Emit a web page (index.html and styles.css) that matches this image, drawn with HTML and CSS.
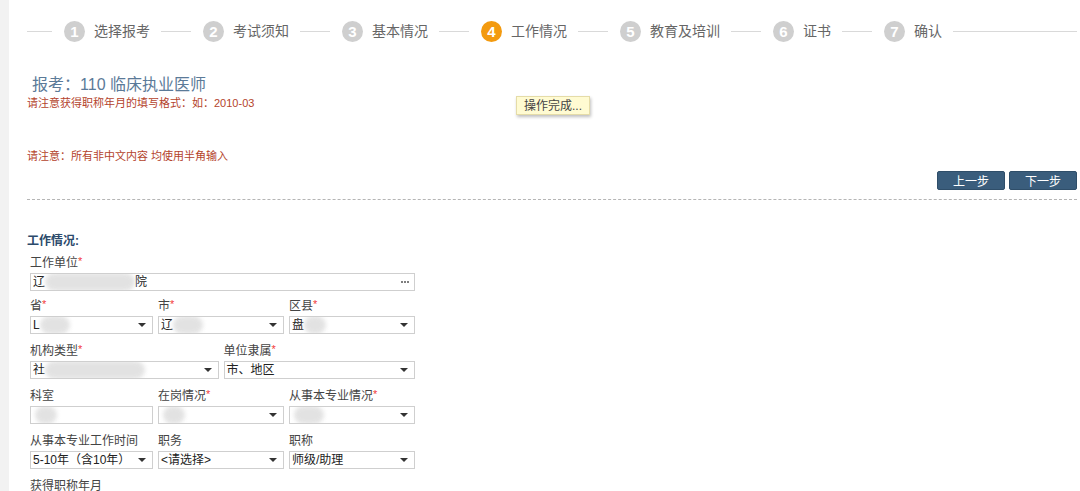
FILE: index.html
```html
<!DOCTYPE html>
<html lang="zh">
<head>
<meta charset="utf-8">
<title>报考 - 工作情况</title>
<link rel="stylesheet" href="styles.css">
</head>
<body>
<div class="page">
  <aside class="strip"></aside>
  <main class="main">
    <nav class="steps">
      <span class="line first"></span>
      <span class="step"><i class="num">1</i><span class="label">选择报考</span></span>
      <span class="line"></span>
      <span class="step"><i class="num">2</i><span class="label">考试须知</span></span>
      <span class="line"></span>
      <span class="step"><i class="num">3</i><span class="label">基本情况</span></span>
      <span class="line"></span>
      <span class="step active"><i class="num">4</i><span class="label">工作情况</span></span>
      <span class="line"></span>
      <span class="step"><i class="num">5</i><span class="label">教育及培训</span></span>
      <span class="line"></span>
      <span class="step"><i class="num">6</i><span class="label">证书</span></span>
      <span class="line"></span>
      <span class="step"><i class="num">7</i><span class="label">确认</span></span>
      <span class="line last"></span>
    </nav>

    <div class="head">
      <h1 class="title">报考<span class="colon">：</span>110 临床执业医师</h1>
      <p class="note">请注意获得职称年月的填写格式：如：2010-03</p>
      <div class="toast">操作完成...</div>
    </div>
    <p class="note note2">请注意：所有非中文内容 均使用半角输入</p>

    <div class="actions">
      <button class="btn" type="button">上一步</button>
      <button class="btn" type="button">下一步</button>
    </div>
    <div class="dash"></div>

    <section class="form">
      <h2 class="sec">工作情况:</h2>

      <div class="field first">
        <div class="lab">工作单位<span class="req">*</span></div>
        <div class="box input">辽<span class="blur w90"></span>院<span class="dots"><i></i><i></i><i></i></span></div>
      </div>

      <div class="row three">
        <div class="field">
          <div class="lab">省<span class="req">*</span></div>
          <div class="box sel">L<span class="blur w30"></span></div>
        </div>
        <div class="field">
          <div class="lab">市<span class="req">*</span></div>
          <div class="box sel">辽<span class="blur w30"></span></div>
        </div>
        <div class="field">
          <div class="lab">区县<span class="req">*</span></div>
          <div class="box sel">盘<span class="blur w20"></span></div>
        </div>
      </div>

      <div class="row two">
        <div class="field">
          <div class="lab">机构类型<span class="req">*</span></div>
          <div class="box sel">社<span class="blur w100"></span></div>
        </div>
        <div class="field">
          <div class="lab">单位隶属<span class="req">*</span></div>
          <div class="box sel">市、地区</div>
        </div>
      </div>

      <div class="row three">
        <div class="field">
          <div class="lab">科室</div>
          <div class="box input"><span class="blur w20 nol"></span></div>
        </div>
        <div class="field">
          <div class="lab">在岗情况<span class="req">*</span></div>
          <div class="box sel"><span class="blur w20 nol"></span></div>
        </div>
        <div class="field">
          <div class="lab">从事本专业情况<span class="req">*</span></div>
          <div class="box sel"><span class="blur w30 nol"></span></div>
        </div>
      </div>

      <div class="row three">
        <div class="field">
          <div class="lab">从事本专业工作时间</div>
          <div class="box sel">5-10年（含10年）</div>
        </div>
        <div class="field">
          <div class="lab">职务</div>
          <div class="box sel">&lt;请选择&gt;</div>
        </div>
        <div class="field">
          <div class="lab">职称</div>
          <div class="box sel">师级/助理</div>
        </div>
      </div>

      <div class="field">
        <div class="lab">获得职称年月</div>
      </div>
    </section>
  </main>
</div>
</body>
</html>
```

FILE: styles.css
```css
* { box-sizing: border-box; }
html, body { margin: 0; padding: 0; background: #fff; }
body {
  font-family: "Liberation Sans", "Noto Sans CJK SC", sans-serif;
  color: #333;
  font-size: 12px;
}
.page { display: flex; min-height: 491px; }
.strip { width: 9px; flex: none; background: #f2f2f2; }
.main { flex: 1; padding: 0 3px 0 18px; }

/* step bar */
.steps {
  display: flex;
  align-items: center;
  height: 62px;
}
.line { height: 1px; background: #d9d9d9; width: 30px; flex: none; margin: 0 12px 0 11px; }
.line.first { width: 25px; margin-left: 0; }
.line.last { flex: 1; margin-right: 0; }
.step { display: flex; align-items: center; gap: 9px; }
.num {
  width: 21px; height: 21px; border-radius: 50%;
  background: #cfcfcf; color: #fff; font-style: normal;
  font: bold 15px/21px "Liberation Sans", sans-serif; text-align: center;
}
.step.active .num { background: #f39a0f; }
.label { font-size: 14px; color: #666; line-height: 20px; height: 20px; }

/* header notes */
.head { position: relative; }
.title {
  margin: 8px 0 0 5px; font-weight: normal; height: 26px;
  font-size: 16px; line-height: 26px; color: #5b7a98;
}
.colon { font-family: "Noto Sans CJK SC", sans-serif; }
.note { margin: 0; font-size: 11px; line-height: 15px; height: 15px; color: #b4432c; }
.note2 { margin-top: 38px; }
.toast {
  position: absolute; left: 489px; top: 26px;
  padding: 0 7px; height: 19px; line-height: 19px;
  background: #fffbd2; border: 1px solid #e5dca8;
  box-shadow: 1px 2px 3px rgba(0,0,0,0.25);
  font-size: 12px; color: #444;
}

.actions { display: flex; justify-content: flex-end; gap: 4px; margin-top: 7px; }
.btn {
  width: 68px; height: 19px; padding: 0; border: 1px solid #2f4e69;
  border-radius: 2px; background: #3a5d7c; color: #fff;
  font: 12px/17px "Noto Sans CJK SC", sans-serif;
}
.dash { border-top: 1px dashed #b5b5b5; margin-top: 9px; }

/* form */
.form { width: 388px; }
.sec {
  margin: 33px 0 6px 0; font-size: 12px; line-height: 16px; height: 16px;
  font-weight: bold; color: #2c4a6b;
}
.field { padding-left: 3px; }
.form > .field, .row { margin-bottom: 9px; }
.form > .field.first { margin-bottom: 7px; }
.row { display: grid; gap: 5px; }
.row.three { grid-template-columns: 1fr 1fr 1fr; }
.row.two { grid-template-columns: 1fr 1fr; }
.row .field + .field { padding-left: 0; }
.lab { font-size: 12px; line-height: 16px; height: 16px; color: #444; margin-bottom: 2px; white-space: nowrap; }
.req { color: #f23b3b; font-size: 11px; line-height: 12px; vertical-align: top; }
.box {
  position: relative; height: 18px; border: 1px solid #cfcfcf; background: #fff;
  font-size: 12px; line-height: 16px; padding: 0 2px; color: #222;
  display: flex; align-items: center; white-space: nowrap; overflow: hidden;
}
.sel::after {
  content: ""; position: absolute; right: 6px; top: 6px;
  border-left: 4px solid transparent; border-right: 4px solid transparent;
  border-top: 4px solid #333;
}
.dots { position: absolute; right: 5px; top: 7px; display: flex; gap: 1px; }
.dots i { width: 2px; height: 2px; border-radius: 1px; background: #555; }
.blur {
  display: inline-block; height: 18px; background: #dedede;
  border-radius: 9px; filter: blur(2px); opacity: 0.85;
}
.w20 { width: 22px; }
.w30 { width: 30px; }
.w90 { width: 90px; }
.w100 { width: 100px; }
.nol { margin-left: 2px; }
```
